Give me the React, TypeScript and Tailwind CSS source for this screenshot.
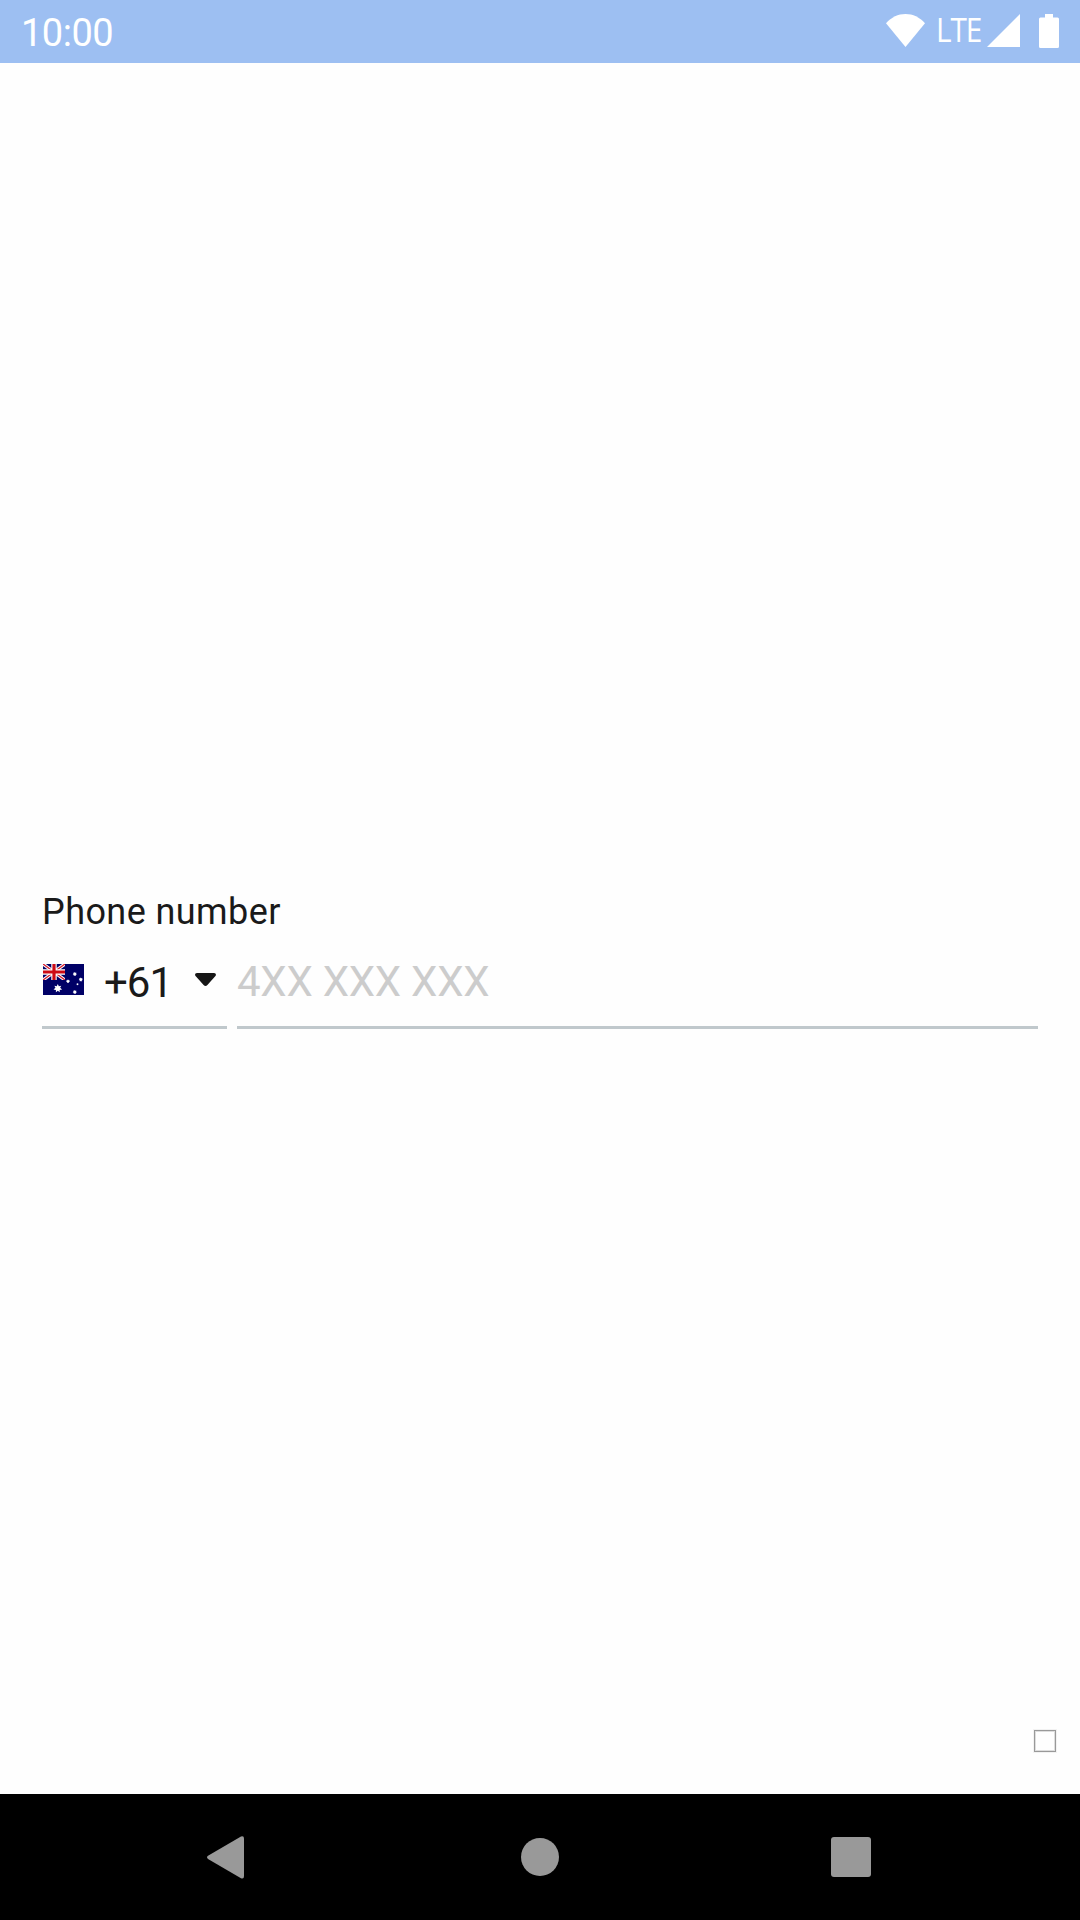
function Flag() {
  const star = (cx: number, cy: number, r: number, inner: number) => {
    const pts: string[] = [];
    for (let i = 0; i < 14; i++) {
      const a = (i * Math.PI) / 7 - Math.PI / 2;
      const d = i % 2 === 0 ? r : inner;
      pts.push(`${(cx + d * Math.cos(a)).toFixed(2)},${(cy + d * Math.sin(a)).toFixed(2)}`);
    }
    return pts.join(" ");
  };
  return (
    <svg width="41" height="31" viewBox="0 0 41 31" className="block shrink-0">
      <rect width="41" height="31" fill="#000066" />
      <svg width="22" height="16" viewBox="0 0 22 16">
        <path d="M0 0L22 16M22 0L0 16" stroke="#fff" strokeWidth="3.4" />
        <path d="M0 0L22 16M22 0L0 16" stroke="#d6202e" strokeWidth="1.4" />
        <path d="M11 0V16M0 8H22" stroke="#fff" strokeWidth="5.4" />
        <path d="M11 0V16M0 8H22" stroke="#cc0a14" strokeWidth="3.2" />
      </svg>
      <polygon points={star(14.8, 24.4, 4.4, 2.4)} fill="#fff" />
      <polygon points={star(31.8, 10, 2.1, 1.4)} fill="#fff" />
      <polygon points={star(25, 17.3, 2, 1.3)} fill="#fff" />
      <polygon points={star(37.8, 15.5, 2.1, 1.4)} fill="#fff" />
      <polygon points={star(34.5, 20.2, 1.2, 0.7)} fill="#fff" />
      <polygon points={star(31.8, 28, 2.1, 1.4)} fill="#fff" />
    </svg>
  );
}

export default function App() {
  return (
    <div className="flex h-[1920px] w-[1080px] flex-col overflow-hidden bg-[#fefefe] font-['Roboto',sans-serif] text-[#1a1a1a]">
      <header className="flex h-[63px] shrink-0 items-start bg-[#9dbff2] text-white">
        <div className="ml-[21px] mt-[11px] text-[38px] leading-[45px] tracking-[-0.5px]">10:00</div>
        <div className="ml-auto flex items-start pr-[21px]">
          <svg width="39" height="33" viewBox="0 0 39 33" className="mt-[14px]">
            <path d="M0 9.2C5.5 3.2 12 0 19.5 0S33.5 3.2 39 9.2L19.5 33Z" fill="#fff" />
          </svg>
          <div className="ml-[11px] mt-[10px] h-10 w-[47px]">
            <span className="inline-block origin-left scale-x-[0.93] font-['Open_Sans',sans-serif] text-[32px] leading-[40px] tracking-[-1.2px]">LTE</span>
          </div>
          <svg width="33" height="33" viewBox="0 0 33 33" className="ml-[4px] mt-[14px]">
            <path d="M33 0V33H0Z" fill="#fff" />
          </svg>
          <svg width="20" height="34" viewBox="0 0 20 34" className="ml-[19px] mt-[14px]">
            <path d="M6 0H14V3.5H18.5A1.5 1.5 0 0 1 20 5V32.5A1.5 1.5 0 0 1 18.5 34H1.5A1.5 1.5 0 0 1 0 32.5V5A1.5 1.5 0 0 1 1.5 3.5H6Z" fill="#fff" />
          </svg>
        </div>
      </header>

      <main className="flex flex-1 flex-col px-[42px] pt-[827px]">
        <label className="h-[43px] text-[36px] leading-[44px] tracking-[0.42px]">Phone number</label>
        <div className="flex h-[96px] gap-[10px]">
          <button className="flex w-[185px] shrink-0 items-start border-b-[3px] border-[#c0c8cc]">
            <span className="ml-px mt-[31px]"><Flag /></span>
            <span className="ml-[20px] mt-[25px] w-[70px] text-left text-[42px] leading-[50px] tracking-[-1px]">+61</span>
            <svg width="21" height="14" viewBox="0 0 21 14" className="ml-[21px] mt-[40px]">
              <path d="M2 0H19C21 0 21.6 2 20 3.6L12.4 12Q10.5 13.8 8.6 12L1 3.6C-.6 2 0 0 2 0Z" fill="#161616" />
            </svg>
          </button>
          <div className="flex-1 border-b-[3px] border-[#c0c8cc] pt-[24px] text-[42px] leading-[50px] tracking-[-0.25px] text-[#cccccc]">4XX XXX XXX</div>
        </div>
        <div className="mb-[42px] mr-[-18px] mt-auto size-[22px] self-end border border-[#999999] shadow-[0_0_0_1px_#f2f2f2,inset_0_0_0_1px_#dedede]" />
      </main>

      <nav className="flex h-[126px] shrink-0 items-center bg-black pl-[207px]">
        <svg width="37" height="43" viewBox="0 0 37 43">
          <path d="M34 .4Q37-.6 37 2.5V40Q37 43.5 34 42.3L1 23Q-1 21.3 1 19.8Z" fill="#999" />
        </svg>
        <div className="ml-[277px] size-[38px] rounded-full bg-[#999999]" />
        <div className="ml-[272px] size-[40px] rounded-[3px] bg-[#999999]" />
      </nav>
    </div>
  );
}
